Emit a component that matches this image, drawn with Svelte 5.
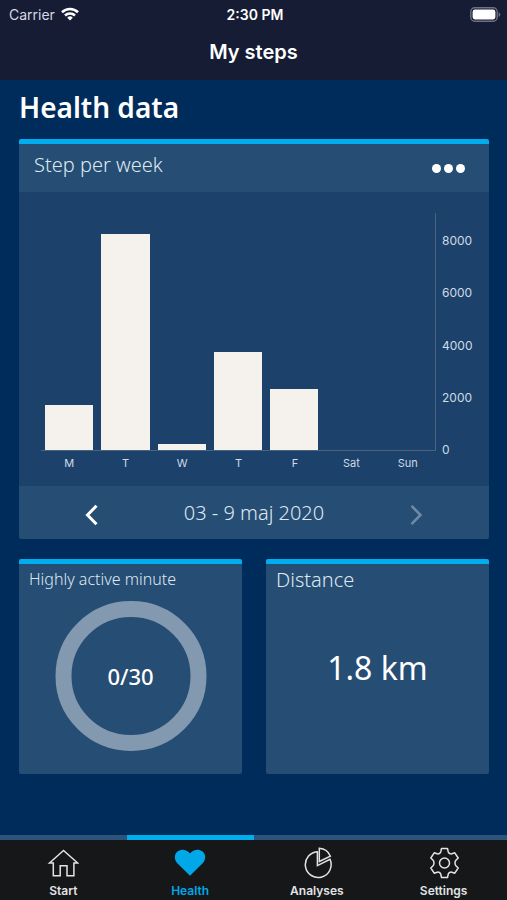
<script lang="ts">
  const days = [
    { label: 'M', steps: 1715 },
    { label: 'T', steps: 8190 },
    { label: 'W', steps: 240 },
    { label: 'T', steps: 3740 },
    { label: 'F', steps: 2330 },
    { label: 'Sat', steps: 0 },
    { label: 'Sun', steps: 0 }
  ];
  const maxSteps = 9000;
  const ticks = [8000, 6000, 4000, 2000, 0];
  const tabs = ['Start', 'Health', 'Analyses', 'Settings'];

  let active = 'Health';
</script>

<div class="app">
  <header>
    <div class="status">
      <div class="carrier">
        Carrier
        <svg width="18" height="14" viewBox="0 0 18 14" fill="none" stroke="#fff" stroke-width="2.6">
          <path d="M1 5.2a11.6 11.6 0 0 1 16 0" />
          <path d="M4 8.5a7.4 7.4 0 0 1 10 0" />
          <path d="M9 13.6l-2.8-2.9a4 4 0 0 1 5.6 0z" fill="#fff" stroke="none" />
        </svg>
      </div>
      <div class="time">2:30 PM</div>
      <div class="battery">
        <svg width="31" height="15" viewBox="0 0 31 15">
          <rect x="0.8" y="0.8" width="26.4" height="13.4" rx="4" fill="none" stroke="#6d7182" stroke-width="1.4" />
          <rect x="2.6" y="2.6" width="22.8" height="9.8" rx="2.4" fill="#fff" />
          <path d="M28.6 5.2c2.2.6 2.2 4 0 4.6z" fill="#6d7182" />
        </svg>
      </div>
    </div>
    <div class="title">My steps</div>
  </header>

  <main>
    <h1>Health data</h1>

    <section class="card">
      <div class="card-head">
        <h2>Step per week</h2>
        <button class="more" aria-label="More"><i></i><i></i><i></i></button>
      </div>
      <div class="chart">
        <div class="plot">
          {#each days as { steps }}
            <div class="slot">
              <div class="bar" style="height: {(steps / maxSteps) * 100}%"></div>
            </div>
          {/each}
        </div>
        <div class="ticks">
          {#each ticks as tick}
            <span>{tick}</span>
          {/each}
        </div>
        <div class="days">
          {#each days as { label }}
            <span>{label}</span>
          {/each}
        </div>
      </div>
      <div class="card-foot">
        <button class="arrow" aria-label="Previous week">
          <svg width="14" height="22" viewBox="0 0 14 22" fill="none" stroke="#fff" stroke-width="3">
            <path d="M12.5 1.8L3.5 11l9 9.2" />
          </svg>
        </button>
        <span>03 - 9 maj 2020</span>
        <button class="arrow" aria-label="Next week" disabled>
          <svg width="14" height="22" viewBox="0 0 14 22" fill="none" stroke="#7089a5" stroke-width="2.6">
            <path d="M1.5 1.8l9 9.2-9 9.2" />
          </svg>
        </button>
      </div>
    </section>

    <div class="tiles">
      <section class="tile">
        <h3 class="small">Highly active minute</h3>
        <div class="ring">
          <svg viewBox="0 0 152 150">
            <ellipse cx="76" cy="75" rx="67.5" ry="67" fill="none" stroke="#8299b0" stroke-width="16" />
          </svg>
          <strong>0/30</strong>
        </div>
      </section>
      <section class="tile">
        <h3>Distance</h3>
        <div class="distance">1.8 km</div>
      </section>
    </div>
  </main>

  <nav>
    {#each tabs as tab}
      <a href="#{tab.toLowerCase()}" class:active={tab === active} on:click|preventDefault={() => (active = tab)}>
        <svg width="32" height="32" viewBox="0 0 32 32" fill="none" stroke="currentColor" stroke-width="1.5">
          {#if tab === 'Start'}
            <path d="M16.5 3.5L2.5 16h3.800v12.700h6.900V18.800h6.800v9.900h6.900V16h3.800z" />
          {:else if tab === 'Health'}
            <path
              d="M16 28.800L3.300 16.200C-.4 12 .3 7 3.700 4.300 7.500 1.500 12.600 2.400 16 6.400c3.400-4 8.500-4.900 12.300-2.100 3.400 2.700 4.100 7.700.4 11.900z"
              fill="currentColor"
              stroke="none"
            />
          {:else if tab === 'Analyses'}
            <path d="M17 4.700A12.900 12.900 0 1 0 29 12.300L16.400 18.600V4.700" />
            <path d="M18.300 1.200c5 .3 9.300 3.500 11.100 8l-11.100 5.300z" />
          {:else}
            <circle cx="16.500" cy="16" r="5" />
            <path
              d="M13.500 1.500h6l.7 3.200q.3 1.200 1.400 1.800t2.200.3l3-1 3.400 5.200-2.300 2.300q-.9.900-.9 2.700t.9 2.700l2.300 2.300-3.400 5.200-3-1q-1.100-.3-2.200.3t-1.400 1.800l-.7 3.200h-6l-.7-3.200q-.3-1.200-1.400-1.800t-2.200-.3l-3 1-3.400-5.200 2.300-2.300q.9-.9.900-2.700t-.9-2.700l-2.300-2.300 3.400-5.200 3 1q1.100.3 2.200-.3t1.400-1.800z"
              stroke-linejoin="round"
            />
          {/if}
        </svg>
        {tab}
      </a>
    {/each}
  </nav>
</div>

<style>
  :global(body) {
    margin: 0;
    background: #002c5b;
  }
  .app {
    display: flex;
    flex-direction: column;
    min-height: 100vh;
    color: #fff;
    font-family: 'Noto Sans', 'Open Sans', sans-serif;
  }
  h1,
  h2,
  h3 {
    margin: 0;
  }
  button {
    display: flex;
    padding: 0;
    border: 0;
    background: none;
    cursor: pointer;
  }
  header {
    height: 80px;
    background: #151c34;
    font-family: Inter, sans-serif;
  }
  .status {
    display: grid;
    grid-template-columns: 1fr auto 1fr;
    align-items: center;
    height: 28px;
    padding: 0 6px 0 9px;
    font-size: 14px;
  }
  .carrier {
    display: flex;
    align-items: center;
    gap: 6px;
    color: #d5d8e0;
  }
  .time {
    font-weight: 600;
  }
  .battery {
    display: flex;
    justify-content: flex-end;
  }
  .title {
    line-height: 48px;
    font-size: 20px;
    font-weight: 600;
    text-align: center;
  }
  main {
    flex: 1;
    padding: 7px 18px 20px 19px;
  }
  h1 {
    margin-bottom: 12px;
    font-size: 28px;
    line-height: 40px;
    font-weight: 600;
  }
  .card,
  .tile {
    border-top: 5px solid #00aeef;
    border-radius: 2px;
    background: #264d73;
  }
  .card-head {
    display: flex;
    align-items: center;
    justify-content: space-between;
    height: 48px;
    padding: 0 24px 0 15px;
  }
  h2,
  h3,
  .card-foot {
    color: #dfe8f2;
    font-size: 20px;
    line-height: 28px;
    font-weight: 300;
  }
  h2 {
    padding-bottom: 6px;
  }
  .more {
    gap: 3px;
  }
  .more i {
    width: 9px;
    height: 9px;
    border-radius: 50%;
    background: #fff;
  }
  .chart {
    display: grid;
    grid-template-columns: 1fr 53px;
    grid-template-rows: 238px auto;
    padding: 21px 0 15px 22px;
    background: #1c426b;
    font-family: Inter, sans-serif;
    font-size: 12px;
    line-height: 16px;
    color: #cfdae6;
  }
  .plot {
    display: grid;
    grid-template-columns: repeat(7, 1fr);
    border-right: 1px solid #48647f;
    border-bottom: 1px solid #48647f;
  }
  .slot {
    display: flex;
    align-items: flex-end;
    padding: 0 4px;
  }
  .bar {
    flex: 1;
    background: #f5f2ed;
  }
  .ticks {
    display: flex;
    flex-direction: column;
    justify-content: space-between;
    margin: 20px 0 -7px;
    padding-left: 6px;
  }
  .days {
    display: grid;
    grid-template-columns: repeat(7, 1fr);
    padding-top: 4px;
    font-size: 11px;
    text-align: center;
  }
  .card-foot {
    display: flex;
    align-items: center;
    justify-content: space-between;
    height: 53px;
    padding: 0 65px;
  }
  .arrow {
    padding-top: 4px;
  }
  .tiles {
    display: grid;
    grid-template-columns: 1fr 1fr;
    gap: 24px;
    margin-top: 20px;
  }
  .tile {
    display: flex;
    flex-direction: column;
    min-height: 210px;
  }
  h3 {
    padding: 2px 10px;
  }
  h3.small {
    line-height: 26px;
    font-size: 16px;
  }
  .ring {
    display: grid;
    place-items: center;
    padding-top: 7px;
  }
  .ring svg,
  .ring strong {
    grid-area: 1 / 1;
  }
  .ring svg {
    width: 152px;
  }
  .ring strong {
    font-size: 22px;
    font-weight: 500;
  }
  .distance {
    padding-top: 48px;
    font-size: 32px;
    line-height: 48px;
    text-align: center;
  }
  nav {
    display: grid;
    grid-template-columns: repeat(4, 1fr);
    background: #151719;
    font-family: Inter, sans-serif;
  }
  nav a {
    display: flex;
    flex-direction: column;
    align-items: center;
    gap: 3px;
    padding-top: 7px;
    border-top: 5px solid #2c5379;
    color: #e2e3e4;
    font-size: 12px;
    line-height: 18px;
    font-weight: 600;
    text-decoration: none;
  }
  nav a.active {
    border-color: #00aeef;
    color: #00a8e8;
  }
</style>
